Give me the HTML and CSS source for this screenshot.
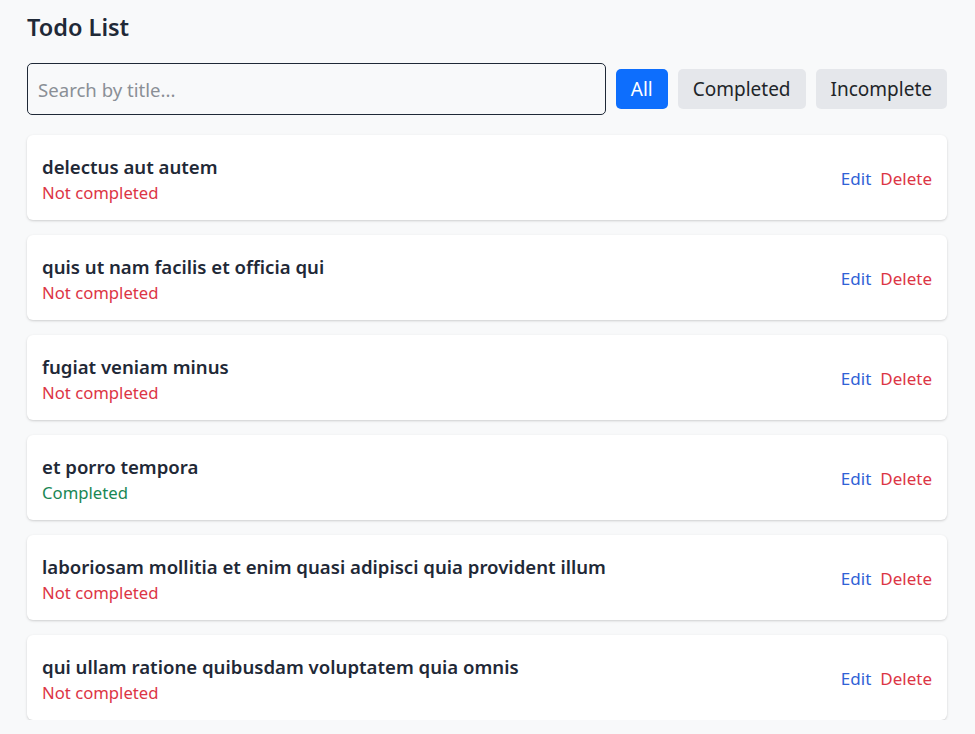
FILE: index.html
```html
<!DOCTYPE html>
<html lang="en">
<head>
<meta charset="utf-8">
<title>Todo List</title>
<link rel="stylesheet" href="styles.css">
</head>
<body>
<main class="page">
  <h1 class="title">Todo List</h1>
  <div class="toolbar">
    <input class="search" type="text" placeholder="Search by title...">
    <button class="filter active">All</button>
    <button class="filter">Completed</button>
    <button class="filter">Incomplete</button>
  </div>
  <ul class="list">
    <li class="card">
      <div class="info"><div class="name">delectus aut autem</div><div class="status no">Not completed</div></div>
      <div class="actions"><a class="edit">Edit</a><a class="delete">Delete</a></div>
    </li>
    <li class="card">
      <div class="info"><div class="name">quis ut nam facilis et officia qui</div><div class="status no">Not completed</div></div>
      <div class="actions"><a class="edit">Edit</a><a class="delete">Delete</a></div>
    </li>
    <li class="card">
      <div class="info"><div class="name">fugiat veniam minus</div><div class="status no">Not completed</div></div>
      <div class="actions"><a class="edit">Edit</a><a class="delete">Delete</a></div>
    </li>
    <li class="card">
      <div class="info"><div class="name">et porro tempora</div><div class="status yes">Completed</div></div>
      <div class="actions"><a class="edit">Edit</a><a class="delete">Delete</a></div>
    </li>
    <li class="card">
      <div class="info"><div class="name">laboriosam mollitia et enim quasi adipisci quia provident illum</div><div class="status no">Not completed</div></div>
      <div class="actions"><a class="edit">Edit</a><a class="delete">Delete</a></div>
    </li>
    <li class="card">
      <div class="info"><div class="name">qui ullam ratione quibusdam voluptatem quia omnis</div><div class="status no">Not completed</div></div>
      <div class="actions"><a class="edit">Edit</a><a class="delete">Delete</a></div>
    </li>
  </ul>
</main>
</body>
</html>
```

FILE: styles.css
```css
* { box-sizing: border-box; }
html, body { margin: 0; padding: 0; }
body {
  background: #f8f9fa;
  font-family: "Noto Sans", "Open Sans", sans-serif;
  color: #212529;
}
.page {
  padding: 9px 28px 0 27px;
}
.title {
  margin: 0 0 18px;
  font-size: 23.5px;
  line-height: 36px;
  font-weight: 600;
  color: #1f2937;
}
.toolbar {
  display: flex;
  align-items: center;
  gap: 10px;
  margin-bottom: 20px;
}
.search {
  flex: 1;
  min-width: 0;
  height: 52px;
  border: 1px solid #1f2937;
  border-radius: 5px;
  padding: 0 10px;
  font-family: inherit;
  font-size: 18.6px;
  background: #f8f9fa;
  color: #212529;
}
.search::placeholder { color: #8a8f96; }
.filter {
  height: 40px;
  padding: 0 15px;
  border: none;
  border-radius: 5px;
  background: #e5e7eb;
  color: #212529;
  font-family: inherit;
  font-size: 19px;
}
.filter.active {
  background: #0d6efd;
  color: #fff;
}
.list {
  list-style: none;
  margin: 0;
  padding: 0;
  display: flex;
  flex-direction: column;
  gap: 15px;
}
.card {
  height: 85px;
  background: #fff;
  border-radius: 6px;
  box-shadow: 0 1px 3px rgba(0,0,0,0.12), 0 1px 2px rgba(0,0,0,0.06);
  display: flex;
  align-items: center;
  justify-content: space-between;
  padding: 2px 15px 0;
}
.name {
  font-size: 18.6px;
  font-weight: 600;
  color: #1f2937;
  line-height: 27px;
}
.status {
  font-size: 16.7px;
  line-height: 25px;
}
.status.no { color: #dc3545; }
.status.yes { color: #198754; }
.actions {
  display: flex;
  gap: 9px;
  font-size: 17px;
}
.edit { color: #2f62d6; }
.delete { color: #dc3545; }
```
